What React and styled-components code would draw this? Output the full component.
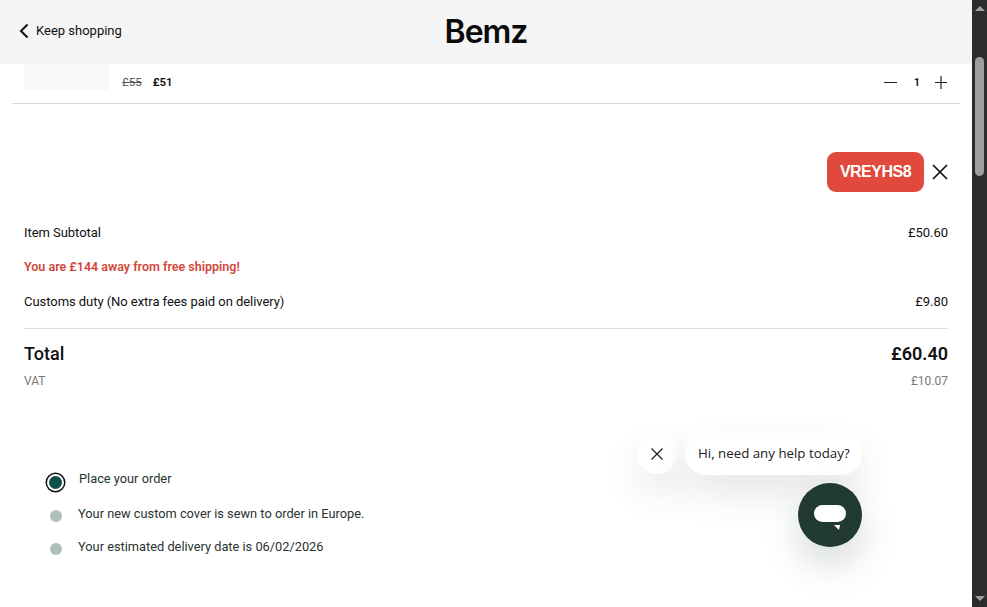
import styled, { createGlobalStyle } from "styled-components";

const GlobalStyle = createGlobalStyle`
  html, body {
    margin: 0;
    padding: 0;
    height: 100%;
    overflow: hidden;
    background: #fff;
  }
  body {
    font-family: Roboto, "Liberation Sans", sans-serif;
    color: #111;
  }
`;

const steps = [
  { text: "Place your order", active: true },
  { text: "Your new custom cover is sewn to order in Europe." },
  { text: "Your estimated delivery date is 06/02/2026" },
];

const App = () => {
  return (
    <Page>
      <GlobalStyle />
      <Main>
        <Header>
          <BackLink>
            <svg width="10" height="16" viewBox="0 0 10 16" fill="none">
              <path d="M8.5 1.5 2 8l6.5 6.5" stroke="#111" strokeWidth="2" />
            </svg>
            Keep shopping
          </BackLink>
          <Logo>Bemz</Logo>
        </Header>

        <ItemRow>
          <Thumb />
          <OldPrice>£55</OldPrice>
          <NewPrice>£51</NewPrice>
          <Qty>
            <svg width="13" height="14" viewBox="0 0 13 14">
              <path d="M0 7.5h13" stroke="#222" strokeWidth="1" />
            </svg>
            <QtyValue>1</QtyValue>
            <svg width="14" height="14" viewBox="0 0 14 14">
              <path d="M1 7.5h12M7 1v13" stroke="#222" strokeWidth="1.2" />
            </svg>
          </Qty>
        </ItemRow>

        <CouponRow>
          <Coupon>VREYHS8</Coupon>
          <svg width="16" height="16" viewBox="0 0 16 16">
            <path d="M1 1l14 14M15 1 1 15" stroke="#111" strokeWidth="1.7" />
          </svg>
        </CouponRow>

        <Summary>
          <SummaryRow>
            <span>Item Subtotal</span>
            <span>£50.60</span>
          </SummaryRow>
          <ShippingNote>You are £144 away from free shipping!</ShippingNote>
          <SummaryRow>
            <span>Customs duty (No extra fees paid on delivery)</span>
            <span>£9.80</span>
          </SummaryRow>
          <Divider />
          <TotalRow>
            <span>Total</span>
            <TotalValue>£60.40</TotalValue>
          </TotalRow>
          <VatRow>
            <span>VAT</span>
            <span>£10.07</span>
          </VatRow>
        </Summary>

        <Steps>
          {steps.map((step) => (
            <Step key={step.text}>
              <Dot $active={step.active} />
              <StepText $active={step.active}>{step.text}</StepText>
            </Step>
          ))}
        </Steps>

        <ChatClose>
          <svg width="12" height="12" viewBox="0 0 12 12">
            <path d="M.5.5l11 11M11.5.5l-11 11" stroke="#222" strokeWidth="1.3" />
          </svg>
        </ChatClose>
        <ChatBubble>Hi, need any help today?</ChatBubble>
        <ChatButton>
          <svg width="32" height="26" viewBox="0 0 32 26">
            <rect x="0" y="0" width="32" height="17" rx="8.5" fill="#fff" />
            <path d="M20 20l6 0-1 5z" fill="#fff" />
          </svg>
        </ChatButton>
      </Main>

      <Scrollbar>
        <ArrowUp />
        <Thumbbar />
        <ArrowDown />
      </Scrollbar>
    </Page>
  );
};

export default App;

const Page = styled.div`
  display: flex;
  width: 987px;
  height: 607px;
  overflow: hidden;
`;

const Main = styled.div`
  position: relative;
  width: 972px;
  height: 607px;
  overflow: hidden;
`;

const Header = styled.header`
  position: relative;
  display: flex;
  align-items: center;
  justify-content: center;
  height: 64px;
  background: #f5f5f5;
`;

const BackLink = styled.a`
  position: absolute;
  left: 19px;
  top: 22px;
  display: flex;
  align-items: center;
  gap: 7px;
  font-size: 13px;
  line-height: 17px;
  color: #111;
`;

const Logo = styled.div`
  font-family: Inter, sans-serif;
  font-size: 32px;
  font-weight: 600;
  line-height: 40px;
  letter-spacing: -1px;
  color: #0b0b0b;
`;

const ItemRow = styled.div`
  display: flex;
  align-items: flex-start;
  height: 39px;
  margin: 0 12px;
  padding: 0 12px;
  border-bottom: 1px solid #d9d9d9;
  font-size: 11.5px;
`;

const Thumb = styled.div`
  width: 85px;
  height: 26px;
  margin-right: 13px;
  background: #f8f8f8;
`;

const OldPrice = styled.span`
  margin: 11px 11px 0 0;
  line-height: 14px;
  color: #555;
  text-decoration: line-through;
`;

const NewPrice = styled.span`
  margin-top: 11px;
  line-height: 14px;
  font-weight: 600;
`;

const Qty = styled.div`
  display: flex;
  align-items: center;
  gap: 15px;
  height: 14px;
  margin-left: auto;
  margin-top: 11px;
`;

const QtyValue = styled.span`
  margin: 0 -1px 0 2px;
  font-weight: 600;
  font-size: 11px;
`;

const CouponRow = styled.div`
  display: flex;
  align-items: center;
  justify-content: flex-end;
  gap: 8px;
  height: 40px;
  margin-top: 48px;
  padding-right: 24px;
`;

const Coupon = styled.div`
  display: flex;
  align-items: center;
  justify-content: center;
  width: 97px;
  height: 40px;
  border-radius: 9px;
  background: #e0493c;
  color: #fff;
  font-family: "Liberation Sans", sans-serif;
  font-size: 16px;
  font-weight: 700;
  letter-spacing: -0.5px;
`;

const Summary = styled.section`
  margin: 32px 24px 0;
  font-size: 13px;
`;

const SummaryRow = styled.div`
  display: flex;
  justify-content: space-between;
  height: 18px;
  line-height: 18px;
  letter-spacing: -0.05px;
`;

const ShippingNote = styled.div`
  height: 18px;
  margin: 16px 0 17px;
  line-height: 18px;
  color: #d0483c;
  font-weight: 600;
  font-size: 12.5px;
`;

const Divider = styled.hr`
  height: 1px;
  margin: 17px 0 0;
  border: 0;
  background: #dcdcdc;
`;

const TotalRow = styled.div`
  display: flex;
  justify-content: space-between;
  height: 22px;
  margin-top: 14px;
  font-size: 18px;
  line-height: 22px;
  font-weight: 500;
`;

const TotalValue = styled.span`
  font-weight: 600;
`;

const VatRow = styled.div`
  display: flex;
  justify-content: space-between;
  height: 16px;
  margin-top: 8px;
  font-size: 12px;
  line-height: 16px;
  color: #777;
`;

const Steps = styled.ol`
  margin: 0;
  padding: 77px 0 0 47px;
  list-style: none;
`;

const Step = styled.li`
  display: flex;
  align-items: center;
  height: 33px;
`;

const Dot = styled.span`
  flex: none;
  box-sizing: border-box;
  width: ${(p) => (p.$active ? "17px" : "12px")};
  height: ${(p) => (p.$active ? "17px" : "12px")};
  margin: ${(p) => (p.$active ? "0 15px 0 0" : "1px 16px 0 3px")};
  border-radius: 50%;
  background: ${(p) => (p.$active ? "#0d4f45" : "#aebfba")};
  border: ${(p) => (p.$active ? "2px solid #fff" : "0")};
  box-shadow: ${(p) => (p.$active ? "0 0 0 1.5px #111" : "none")};
`;

const StepText = styled.span`
  position: relative;
  top: ${(p) => (p.$active ? "-4px" : "-2px")};
  font-size: 12.8px;
  color: #29332f;
`;

const ChatClose = styled.div`
  position: absolute;
  left: 637px;
  top: 434px;
  display: flex;
  align-items: center;
  justify-content: center;
  width: 40px;
  height: 40px;
  border-radius: 50%;
  background: #fff;
  box-shadow: 0 18px 36px rgba(30, 60, 50, 0.12);
`;

const ChatBubble = styled.div`
  position: absolute;
  left: 685px;
  top: 433px;
  box-sizing: border-box;
  width: 177px;
  height: 42px;
  padding-left: 13px;
  border-radius: 21px;
  background: #fff;
  box-shadow: 0 18px 36px rgba(30, 60, 50, 0.12);
  font-family: "Open Sans", sans-serif;
  font-size: 13.3px;
  line-height: 40px;
  color: #222;
  white-space: nowrap;
`;

const ChatButton = styled.div`
  position: absolute;
  left: 798px;
  top: 483px;
  display: flex;
  align-items: center;
  justify-content: center;
  width: 64px;
  height: 64px;
  padding-top: 5px;
  box-sizing: border-box;
  border-radius: 50%;
  background: #203a33;
  box-shadow: 0 18px 36px rgba(30, 60, 50, 0.18);
`;

const Scrollbar = styled.div`
  display: flex;
  flex-direction: column;
  align-items: center;
  width: 15px;
  height: 607px;
  background: #2c2c2c;
`;

const ArrowUp = styled.div`
  width: 0;
  height: 0;
  margin-top: 6px;
  border-left: 5px solid transparent;
  border-right: 5px solid transparent;
  border-bottom: 5px solid #a0a0a0;
`;

const Thumbbar = styled.div`
  width: 9px;
  height: 119px;
  margin-top: 46px;
  border-radius: 5px;
  background: #9f9f9f;
`;

const ArrowDown = styled.div`
  width: 0;
  height: 0;
  margin-top: auto;
  margin-bottom: 6px;
  border-left: 5px solid transparent;
  border-right: 5px solid transparent;
  border-top: 5px solid #a0a0a0;
`;
